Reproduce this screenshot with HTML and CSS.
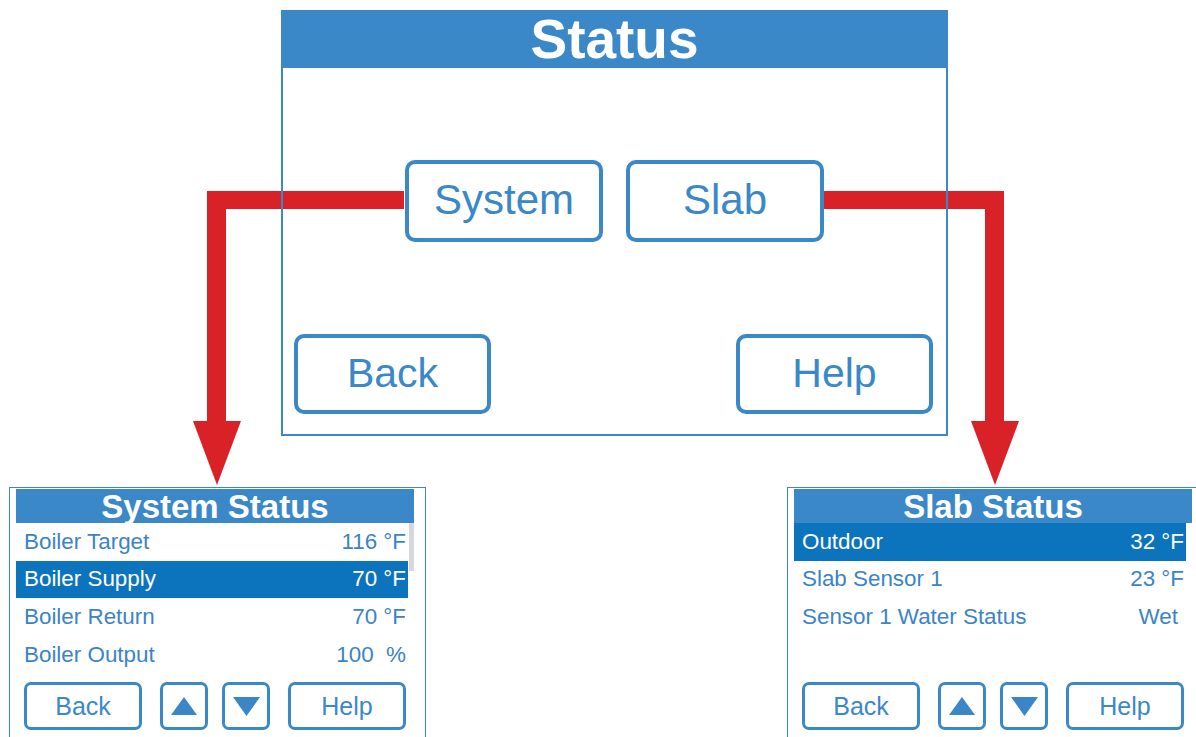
FILE: index.html
```html
<!DOCTYPE html>
<html>
<head>
<meta charset="utf-8">
<link rel="stylesheet" href="styles.css">
</head>
<body>
<div class="canvas">
  <svg class="arrows" width="1196" height="737" viewBox="0 0 1196 737">
    <path d="M404 191 H207 V421 H193 L217 485 L241 421 H226 V209 H404 Z" fill="#d92128"/>
    <path d="M822 191 H1004 V421 H1019 L995 485 L971 421 H985 V209 H822 Z" fill="#d92128"/>
  </svg>

  <section class="status">
    <header class="status-head">Status</header>
    <div class="status-mid">
      <div class="big-btn">System</div>
      <div class="big-btn">Slab</div>
    </div>
    <div class="status-bottom">
      <div class="big-btn">Back</div>
      <div class="big-btn">Help</div>
    </div>
  </section>

  <div class="subs">
    <section class="sub">
      <div class="screen">
        <header class="sub-head">System Status</header>
        <div class="list">
          <div class="rows">
            <div class="row"><span>Boiler Target</span><span>116 °F</span></div>
            <div class="row sel"><span>Boiler Supply</span><span>70 °F</span></div>
            <div class="row"><span>Boiler Return</span><span>70 °F</span></div>
            <div class="row"><span>Boiler Output</span><span class="pre">100  %</span></div>
          </div>
          <div class="scroll"><div class="thumb"></div></div>
        </div>
        <div class="btns">
          <div class="sb wide">Back</div>
          <div class="pair">
            <div class="sb sq"><svg width="26" height="18" viewBox="0 0 26 18"><polygon points="0,18 26,18 13,0" fill="#3a86c7"/></svg></div>
            <div class="sb sq"><svg width="27" height="19" viewBox="0 0 27 19"><polygon points="0,0 27,0 13.5,19" fill="#3a86c7"/></svg></div>
          </div>
          <div class="sb wide">Help</div>
        </div>
      </div>
    </section>

    <section class="sub">
      <div class="screen">
        <header class="sub-head">Slab Status</header>
        <div class="list">
          <div class="rows">
            <div class="row sel"><span>Outdoor</span><span>32 °F</span></div>
            <div class="row"><span>Slab Sensor 1</span><span>23 °F</span></div>
            <div class="row"><span>Sensor 1 Water Status</span><span class="wet">Wet</span></div>
          </div>
          <div class="scroll"></div>
        </div>
        <div class="btns">
          <div class="sb wide">Back</div>
          <div class="pair">
            <div class="sb sq"><svg width="26" height="18" viewBox="0 0 26 18"><polygon points="0,18 26,18 13,0" fill="#3a86c7"/></svg></div>
            <div class="sb sq"><svg width="27" height="19" viewBox="0 0 27 19"><polygon points="0,0 27,0 13.5,19" fill="#3a86c7"/></svg></div>
          </div>
          <div class="sb wide">Help</div>
        </div>
      </div>
    </section>
  </div>
</div>
</body>
</html>
```

FILE: styles.css
```css
* { box-sizing: border-box; }
html, body { margin: 0; padding: 0; background: #ffffff; overflow: hidden; }
body { font-family: "Liberation Sans", Arial, sans-serif; }

.canvas {
  position: relative;
  width: 1196px;
  height: 737px;
  overflow: hidden;
  padding-top: 10px;
}

.arrows {
  position: absolute;
  left: 0;
  top: 0;
  z-index: 0;
}

.status {
  position: relative;
  z-index: 1;
  margin-left: 281px;
  width: 667px;
  height: 426px;
  border: 2px solid #3a88c8;
  border-top-width: 0;
}

.status-head {
  height: 58px;
  background: #3a88c8;
  color: #ffffff;
  font-weight: bold;
  font-size: 55px;
  line-height: 58px;
  text-align: center;
}

.status-mid {
  margin-top: 92px;
  display: flex;
  justify-content: center;
  gap: 23px;
}

.status-bottom {
  margin-top: 92px;
  display: flex;
  justify-content: space-between;
  padding: 0 13px 0 11px;
}

.big-btn {
  width: 198px;
  height: 82px;
  border: 4px solid #3a88c8;
  border-radius: 10px;
  background: #ffffff;
  color: #3a88c8;
  font-size: 42px;
  display: flex;
  align-items: center;
  justify-content: center;
  padding-bottom: 2px;
}

.status-bottom .big-btn { width: 197px; height: 80px; font-size: 41px; }

.subs {
  display: flex;
  gap: 361px;
  margin-top: 51px;
  padding-left: 9px;
}

.sub {
  flex: none;
  width: 417px;
  height: 270px;
  border: 1px solid #3a88c8;
  background: #ffffff;
  position: relative;
  z-index: 1;
}

.screen {
  margin: 1px 11px 0 6px;
}

.sub-head {
  height: 34px;
  background: #3a88c8;
  color: #ffffff;
  font-weight: bold;
  font-size: 33px;
  line-height: 35px;
  text-align: center;
}

.list {
  display: flex;
  height: 150px;
}

.rows { flex: 1; }

.row {
  height: 37.6px;
  display: flex;
  justify-content: space-between;
  align-items: center;
  padding: 0 2px 0 8px;
  font-size: 22.4px;
  color: #3b84c6;
}

.row.sel {
  background: #0c74bd;
  color: #ffffff;
}

.pre { white-space: pre; }
.wet { padding-right: 6px; }

.scroll {
  width: 6px;
  padding-left: 1px;
}

.thumb {
  width: 5px;
  height: 48px;
  background: #d6d7df;
}

.btns {
  margin-top: 9px;
  padding-left: 8px;
  display: flex;
  gap: 18px;
}

.pair {
  display: flex;
  gap: 14px;
}

.sb {
  height: 48px;
  border: 3px solid #3a88c8;
  border-radius: 7px;
  color: #3a88c8;
  font-size: 25px;
  display: flex;
  align-items: center;
  justify-content: center;
}

.sb.wide { width: 118px; }
.sb.sq { width: 48px; }
.sb svg { display: block; }
```
